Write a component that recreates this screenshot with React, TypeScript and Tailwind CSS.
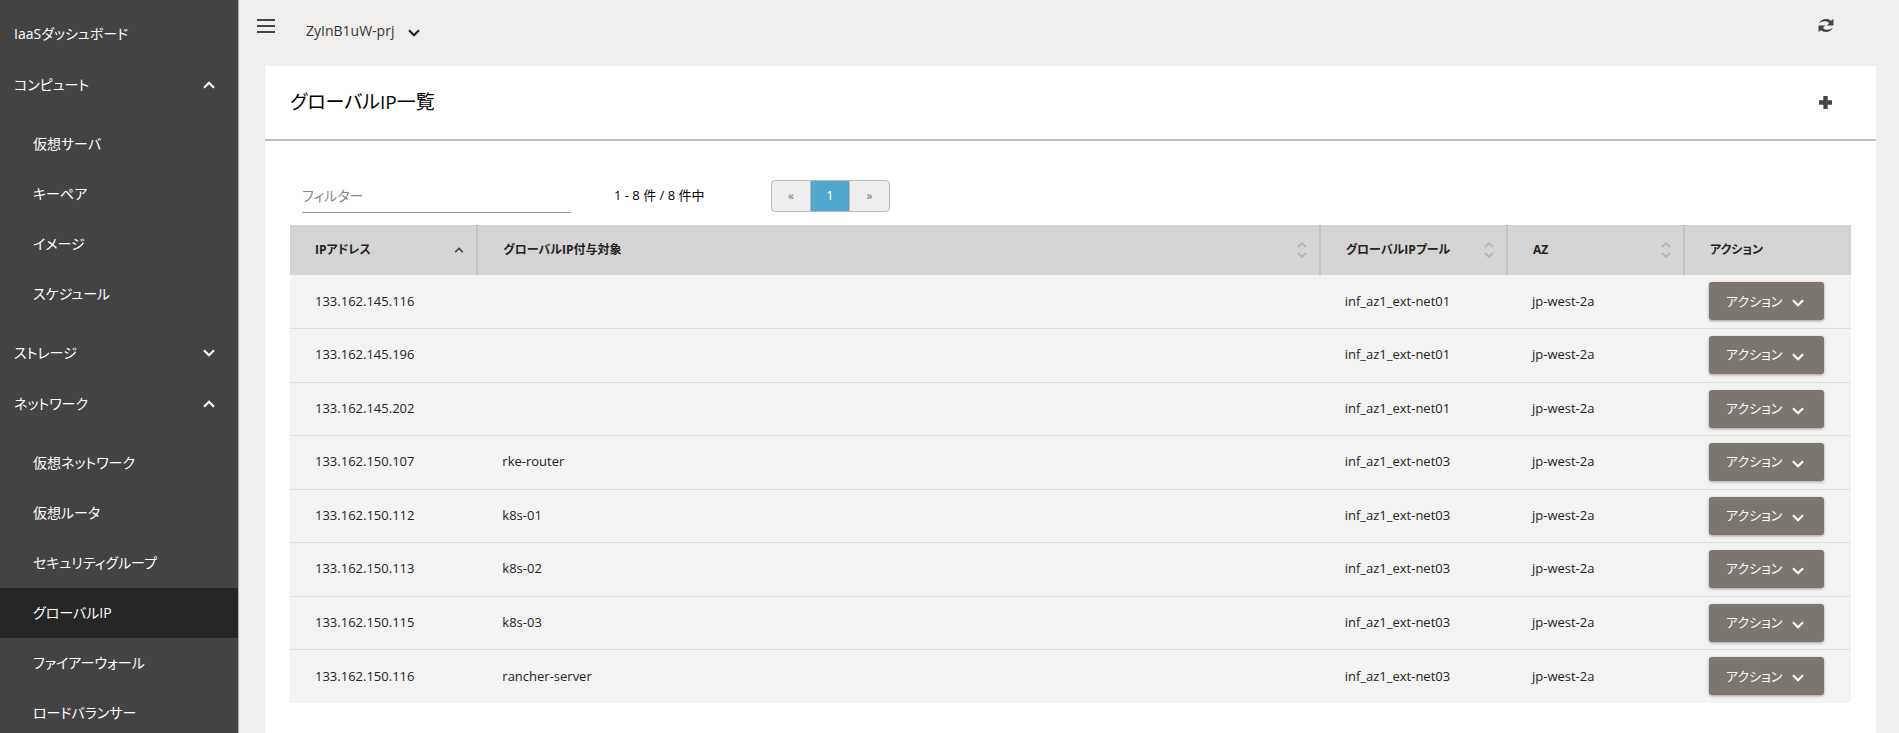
import React, { useState } from 'react';
import clsx from 'clsx';

type MenuGroup = {
  label: string;
  children?: string[];
};

const menu: MenuGroup[] = [
  { label: 'IaaSダッシュボード' },
  { label: 'コンピュート', children: ['仮想サーバ', 'キーペア', 'イメージ', 'スケジュール'] },
  { label: 'ストレージ', children: ['ディスク'] },
  {
    label: 'ネットワーク',
    children: [
      '仮想ネットワーク',
      '仮想ルータ',
      'セキュリティグループ',
      'グローバルIP',
      'ファイアーウォール',
      'ロードバランサー',
    ],
  },
];

const rows = [
  { ip: '133.162.145.116', target: '', pool: 'inf_az1_ext-net01', az: 'jp-west-2a' },
  { ip: '133.162.145.196', target: '', pool: 'inf_az1_ext-net01', az: 'jp-west-2a' },
  { ip: '133.162.145.202', target: '', pool: 'inf_az1_ext-net01', az: 'jp-west-2a' },
  { ip: '133.162.150.107', target: 'rke-router', pool: 'inf_az1_ext-net03', az: 'jp-west-2a' },
  { ip: '133.162.150.112', target: 'k8s-01', pool: 'inf_az1_ext-net03', az: 'jp-west-2a' },
  { ip: '133.162.150.113', target: 'k8s-02', pool: 'inf_az1_ext-net03', az: 'jp-west-2a' },
  { ip: '133.162.150.115', target: 'k8s-03', pool: 'inf_az1_ext-net03', az: 'jp-west-2a' },
  { ip: '133.162.150.116', target: 'rancher-server', pool: 'inf_az1_ext-net03', az: 'jp-west-2a' },
];

const Chevron = ({ up = false, className = '' }: { up?: boolean; className?: string }) => (
  <svg viewBox="0 0 12 8" aria-hidden="true" className={clsx('shrink-0', className)}>
    <path
      d={up ? 'M1 6.8 6 1.8l5 5' : 'M1 1.2l5 5 5-5'}
      fill="none"
      stroke="currentColor"
      strokeWidth="2.2"
    />
  </svg>
);

const SortIcon = () => (
  <svg viewBox="0 0 10 18" aria-hidden="true" className="h-[18px] w-[10px] shrink-0 text-[#b4b4b4]">
    <path d="M1 6l4-4 4 4M1 12l4 4 4-4" fill="none" stroke="currentColor" strokeWidth="1.8" />
  </svg>
);

const Sidebar = () => {
  const [open, setOpen] = useState<string[]>(['コンピュート', 'ネットワーク']);

  const toggle = (label: string) => {
    setOpen(open.includes(label) ? open.filter((l) => l !== label) : [...open, label]);
  };

  return (
    <nav className="w-[239px] shrink-0 overflow-hidden border-r border-[#b0b0b0] bg-[#434343] pt-[9px] text-sm text-white">
      <ul className="flex flex-col gap-px">
        {menu.map((group) => (
          <li key={group.label}>
            {group.children ? (
              <button
                type="button"
                aria-expanded={open.includes(group.label)}
                onClick={() => toggle(group.label)}
                className="flex h-[50px] w-full items-center justify-between pr-[23px] pl-[14px]"
              >
                {group.label}
                <Chevron up={open.includes(group.label)} className="h-2 w-3" />
              </button>
            ) : (
              <a href="#" className="flex h-[50px] items-center pl-[14px]">
                {group.label}
              </a>
            )}
            {group.children && open.includes(group.label) && (
              <ul className="pt-[9px] pb-2">
                {group.children.map((item) => (
                  <li key={item}>
                    <a
                      href="#"
                      className={clsx(
                        'flex h-[50px] items-center pl-[33px]',
                        item === 'グローバルIP' && 'bg-[#262626]'
                      )}
                    >
                      {item}
                    </a>
                  </li>
                ))}
              </ul>
            )}
          </li>
        ))}
      </ul>
    </nav>
  );
};

const TopBar = () => (
  <header className="flex h-[66px] items-start justify-between pr-[65px] pl-[18px]">
    <div className="flex items-start">
      <button type="button" aria-label="メニュー" className="mt-[19px]">
        <svg viewBox="0 0 18 14" className="h-[14px] w-[18px] text-[#444444]" aria-hidden="true">
          <path d="M0 1h18M0 7h18M0 13h18" stroke="currentColor" strokeWidth="2" />
        </svg>
      </button>
      <button type="button" className="mt-[18px] ml-[31px] flex h-[25px] items-center gap-[14px] text-sm text-[#333333]">
        ZyInB1uW-prj
        <Chevron className="mt-1 h-2 w-3 text-[#222222]" />
      </button>
    </div>
    <button type="button" aria-label="更新" className="mt-[18px]">
      <svg viewBox="0 0 16 15" className="h-[15px] w-4 text-[#444444]" aria-hidden="true">
        <path
          fill="currentColor"
          d="M1 5.500C2.200 2.600 4.800 1 8 1c2 0 3.700.600 5 1.700L15.500 1v6.500H8.700l2.400-2.200C10.300 4.100 9 3.400 7.300 3.300 4.900 3.100 2.800 3.900 1 5.500zM15 9.500C13.800 12.400 11.200 14 8 14c-2 0-3.700-.600-5-1.700L.500 14V7.500h6.800L4.900 9.700c.8 1.200 2.100 1.900 3.800 2 2.400.2 4.500-.600 6.300-2.200z"
        />
      </svg>
    </button>
  </header>
);

const headCell = 'border-r-2 border-[#c2c2c2] pr-3 pl-[25px] text-left font-bold';

const IpTable = () => (
  <table className="w-full table-fixed border-collapse text-[13px] text-[#222222]">
    <colgroup>
      <col className="w-[12%]" />
      <col />
      <col className="w-[12%]" />
      <col className="w-[177px]" />
      <col className="w-[167px]" />
    </colgroup>
    <thead className="text-xs">
      <tr className="h-[50px] bg-[#d4d4d4]">
        <th className={headCell}>
          <div className="flex items-center justify-between">
            IPアドレス
            <Chevron up className="h-1.5 w-[10px] text-[#444444]" />
          </div>
        </th>
        <th className={headCell}>
          <div className="flex items-center justify-between">
            グローバルIP付与対象
            <SortIcon />
          </div>
        </th>
        <th className={headCell}>
          <div className="flex items-center justify-between">
            グローバルIPプール
            <SortIcon />
          </div>
        </th>
        <th className={headCell}>
          <div className="flex items-center justify-between">
            AZ
            <SortIcon />
          </div>
        </th>
        <th className="pl-[25px] text-left font-bold">アクション</th>
      </tr>
    </thead>
    <tbody>
      {rows.map((row) => (
        <tr key={row.ip} className="h-[53px] border-b border-[#dedede] bg-[#f3f3f3] last:border-b-0 even:h-[54px]">
          <td className="pl-[25px]">{row.ip}</td>
          <td className="pl-[25px]">{row.target}</td>
          <td className="pl-[25px]">{row.pool}</td>
          <td className="pl-[25px]">{row.az}</td>
          <td className="pl-[25px]">
            <button
              type="button"
              className="flex h-[38px] w-[115px] items-center justify-between rounded-[3px] bg-[#7b766f] pr-5 pl-[17px] text-[13px] text-white shadow-[0_1px_3px_rgba(0,0,0,0.35)]"
            >
              アクション
              <Chevron className="mt-1 h-2 w-3" />
            </button>
          </td>
        </tr>
      ))}
    </tbody>
  </table>
);

const App = () => {
  const [filter, setFilter] = useState('');

  return (
    <div className="flex h-screen overflow-hidden bg-[#f0efed] font-['Open_Sans','Noto_Sans_CJK_JP',sans-serif] [font-feature-settings:'palt']">
      <Sidebar />
      <div className="flex min-w-0 flex-1 flex-col">
        <TopBar />
        <main className="mr-[23px] ml-[26px] flex-1 bg-white">
          <div className="flex h-[75px] items-center justify-between border-b-2 border-[#bdbdbd] pr-11 pl-[25px]">
            <h1 className="text-[19px] text-black">グローバルIP一覧</h1>
            <button type="button" aria-label="追加">
              <svg viewBox="0 0 13 13" className="h-[13px] w-[13px] text-[#444444]" aria-hidden="true">
                <path d="M6.500 0v13M0 6.500h13" stroke="currentColor" strokeWidth="4.400" />
              </svg>
            </button>
          </div>
          <div className="px-[25px] pt-[37px]">
            <div className="mb-3 flex items-center pl-3">
              <input
                type="text"
                aria-label="フィルター"
                placeholder="フィルター"
                value={filter}
                onChange={(e) => setFilter(e.target.value)}
                className="h-[35px] w-[269px] border-b border-[#999999] text-sm outline-none placeholder:text-[#888888]"
              />
              <p className="ml-[43px] w-[157px] text-[13px] text-black">1 - 8 件 / 8 件中</p>
              <div className="flex h-8 divide-x divide-[#bbbbbb] overflow-hidden rounded-[4px] border border-[#bbbbbb] bg-[#eeeeee] text-xs text-[#777777]">
                <button type="button" aria-label="前へ" className="w-[39px]">«</button>
                <button type="button" className="w-[39px] bg-[#52a7cd] text-[13px] text-white">1</button>
                <button type="button" aria-label="次へ" className="w-[39px]">»</button>
              </div>
            </div>
            <IpTable />
          </div>
        </main>
      </div>
    </div>
  );
};

export default App;
